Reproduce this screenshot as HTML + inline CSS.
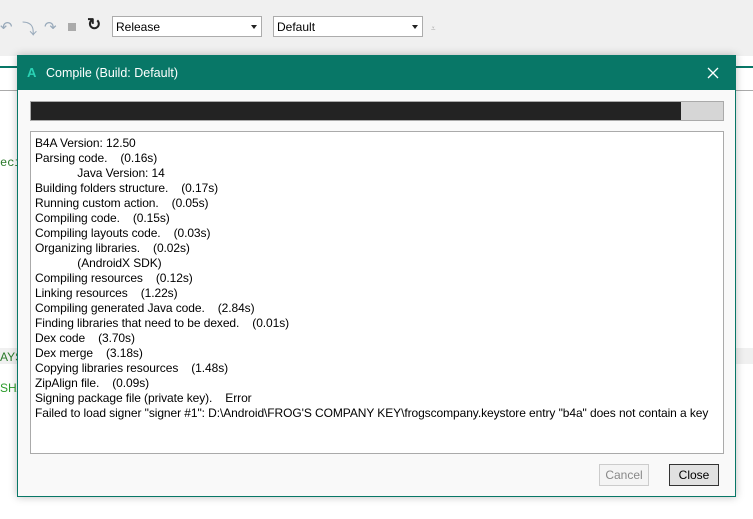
<!DOCTYPE html>
<html><head><style>
body{margin:0;width:753px;height:519px;background:#fff;position:relative;overflow:hidden;font-family:"Liberation Sans",sans-serif;}
.tb{position:absolute;left:0;top:0;width:753px;height:56px;background:#f0f0f0;}
.sel{position:absolute;top:16px;height:21px;border:1px solid #acacac;background:#fff;font-size:12px;line-height:21px;padding-left:3px;box-sizing:border-box;}
.sel:after{content:"";position:absolute;right:4px;top:8px;border-left:3px solid transparent;border-right:3px solid transparent;border-top:4px solid #222;}
.ic{position:absolute;top:18px;font-size:15px;color:#9ab;}
.dlg{position:absolute;left:17px;top:55px;width:719px;height:442px;border:1px solid #087767;box-sizing:border-box;background:#f9f9f9;box-shadow:0 0 8px rgba(0,0,0,.25);}
.title{position:absolute;left:0;top:0;width:100%;height:34px;background:#087767;color:#fff;font-size:12.5px;line-height:34px;}
.prog{position:absolute;left:12px;top:45px;width:694px;height:20px;border:1px solid #aaa;box-sizing:border-box;background:#d6d6d6;}
.txt{position:absolute;left:12px;top:75px;width:694px;height:323px;border:1px solid #aaa;box-sizing:border-box;background:#fff;font-size:12px;letter-spacing:-0.08px;color:#000;padding:4px 0 0 4px;line-height:15px;white-space:pre;}
.btn{position:absolute;top:408px;width:50px;height:22px;box-sizing:border-box;font-size:12px;text-align:center;line-height:20px;}
</style></head><body>
<div class="tb">
<span class="ic" style="left:0">↶</span><span class="ic" style="left:22px">⤵</span><span class="ic" style="left:44px">↷</span>
<div style="position:absolute;left:68px;top:23px;width:8px;height:8px;background:#aaa"></div>
<span style="position:absolute;left:87px;top:15px;font-size:17px;color:#222;font-weight:bold">↻</span>
<div class="sel" style="left:112px;width:150px">Release</div>
<div class="sel" style="left:273px;width:150px">Default</div>
<span style="position:absolute;left:431px;top:24px;font-size:8px;color:#aaa">⩡</span>
</div>
<div style="position:absolute;left:0;top:66px;width:753px;height:2px;background:#087767"></div>
<div style="position:absolute;left:0;top:90px;width:753px;height:1px;background:#aaa"></div>
<div style="position:absolute;left:0;top:348px;width:753px;height:16px;background:#f0f0f0"></div>
<span style="position:absolute;left:0;top:156px;font:12px 'Liberation Mono',monospace;color:#2a7a2a">eci</span>
<span style="position:absolute;left:0;top:350px;font:12px 'Liberation Sans',sans-serif;color:#2a7a2a">AYS</span>
<span style="position:absolute;left:0;top:381px;font:12px 'Liberation Sans',sans-serif;color:#2a9a2a">SHA</span>
<div class="dlg">
<div class="title"><span style="position:absolute;left:9px;font-weight:bold;color:#2bd3b5;font-size:13px">A</span><span style="position:absolute;left:28px">Compile (Build: Default)</span>
<svg style="position:absolute;left:689px;top:11px" width="12" height="12"><path d="M1 1L11 11M11 1L1 11" stroke="#fff" stroke-width="1.3"/></svg></div>
<div class="prog"><div style="width:650px;height:18px;background:#232323"></div></div>
<div class="txt">B4A Version: 12.50
Parsing code.    (0.16s)
             Java Version: 14
Building folders structure.    (0.17s)
Running custom action.    (0.05s)
Compiling code.    (0.15s)
Compiling layouts code.    (0.03s)
Organizing libraries.    (0.02s)
             (AndroidX SDK)
Compiling resources    (0.12s)
Linking resources    (1.22s)
Compiling generated Java code.    (2.84s)
Finding libraries that need to be dexed.    (0.01s)
Dex code    (3.70s)
Dex merge    (3.18s)
Copying libraries resources    (1.48s)
ZipAlign file.    (0.09s)
Signing package file (private key).    Error
Failed to load signer "signer #1": D:\Android\FROG'S COMPANY KEY\frogscompany.keystore entry "b4a" does not contain a key</div>
<div class="btn" style="left:581px;border:1px solid #ccc;color:#888;background:#f4f4f4">Cancel</div>
<div class="btn" style="left:651px;border:1px solid #333;background:#e1e1e1">Close</div>
</div>
</body></html>
